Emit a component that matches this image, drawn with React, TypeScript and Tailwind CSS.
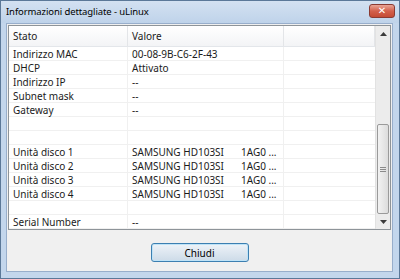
import React from 'react';

type Row = { label: string; value: string; extra?: string };

const rows: Row[] = [
  { label: 'Indirizzo MAC', value: '00-08-9B-C6-2F-43' },
  { label: 'DHCP', value: 'Attivato' },
  { label: 'Indirizzo IP', value: '--' },
  { label: 'Subnet mask', value: '--' },
  { label: 'Gateway', value: '--' },
  { label: '', value: '' },
  { label: '', value: '' },
  { label: 'Unità disco 1', value: 'SAMSUNG HD103SI', extra: '1AG0 ...' },
  { label: 'Unità disco 2', value: 'SAMSUNG HD103SI', extra: '1AG0 ...' },
  { label: 'Unità disco 3', value: 'SAMSUNG HD103SI', extra: '1AG0 ...' },
  { label: 'Unità disco 4', value: 'SAMSUNG HD103SI', extra: '1AG0 ...' },
  { label: '', value: '' },
  { label: 'Serial Number', value: '--' },
];

function ArrowUp() {
  return (
    <svg width="7" height="4" viewBox="0 0 7 4">
      <path d="M0 4 L3.5 0 L7 4 Z" fill="#3b3b3b" />
    </svg>
  );
}

function ArrowDown() {
  return (
    <svg width="7" height="4" viewBox="0 0 7 4">
      <path d="M0 0 L7 0 L3.5 4 Z" fill="#3b3b3b" />
    </svg>
  );
}

export default function App() {
  return (
    <div
      className="w-[400px] h-[279px] flex flex-col bg-[#c3d6ec] border border-[#5b7898] text-[10px] text-[#1b1b1b] overflow-hidden"
      style={{ fontFamily: '"Noto Sans", "Open Sans", sans-serif' }}
    >
      {/* Title bar */}
      <div className="h-[22px] shrink-0 flex items-center justify-between pl-[5px] pr-[4px] bg-gradient-to-b from-[#d3e1f1] to-[#bfd3ea]">
        <span className="leading-none text-[9.5px] tracking-[-0.1px] text-black">Informazioni dettagliate - uLinux</span>
        <div className="w-[26px] h-[14px] mt-[-3px] rounded-[3px] border border-[#8a3a32] bg-gradient-to-b from-[#e8a496] via-[#d3604c] to-[#c44a34] flex items-center justify-center">
          <span className="text-white font-bold text-[10px] leading-none" style={{ fontFamily: '"DejaVu Sans", sans-serif' }}>✕</span>
        </div>
      </div>

      {/* Client area */}
      <div className="flex-1 ml-[5px] mr-[6px] mb-[6px] border border-[#98aecb] bg-[#f0f0f0] flex flex-col pt-[1px] px-[1px]">
        {/* List view */}
        <div className="h-[205px] border border-[#8e9499] bg-white flex">
          <div className="flex-1 flex flex-col">
            {/* Header */}
            <div className="h-[21px] flex border-b border-[#e3e6ea] bg-gradient-to-b from-[#ffffff] to-[#f3f4f6]">
              <div className="w-[119px] pl-[4px] flex items-center border-r border-[#e3e5e8]">Stato</div>
              <div className="w-[156px] pl-[4px] flex items-center border-r border-[#e3e5e8]">Valore</div>
              <div className="flex-1 border-r border-[#e3e5e8]" />
            </div>
            {rows.map((r, i) => (
              <div key={i} className="h-[14px] flex border-b border-[#f0f0f0] leading-[13px]">
                <div className="w-[119px] pl-[4px] pt-[1px] border-r border-[#f0f0f0] whitespace-nowrap flex items-center">{r.label}</div>
                <div className="w-[156px] pl-[4px] pt-[1px] border-r border-[#f0f0f0] flex items-center whitespace-nowrap">
                  <span className="w-[109px]">{r.value}</span>
                  {r.extra && <span>{r.extra}</span>}
                </div>
                <div className="flex-1" />
              </div>
            ))}
          </div>
          {/* Scrollbar */}
          <div className="w-[15px] bg-[#ececec] border-l border-[#e2e2e2] flex flex-col">
            <div className="h-[15px] flex items-center justify-center"><ArrowUp /></div>
            <div className="h-[83px]" />
            <div className="h-[90px] mx-[1px] rounded-[2px] border border-[#9a9a9a] bg-gradient-to-r from-[#f2f2f2] to-[#dcdcdc] flex items-center justify-center">
              <div className="flex flex-col gap-[1px]">
                <div className="w-[6px] h-[1px] bg-[#8a8a8a]" />
                <div className="w-[6px] h-[1px] bg-[#8a8a8a]" />
                <div className="w-[6px] h-[1px] bg-[#8a8a8a]" />
              </div>
            </div>
            <div className="flex-1 flex items-center justify-center"><ArrowDown /></div>
          </div>
        </div>

        {/* Button */}
        <div className="flex justify-center mt-[13px]">
          <button className="w-[98px] h-[19px] rounded-[3px] border border-[#3c7fb1] bg-gradient-to-b from-[#eef3f8] to-[#cddbe8] flex items-center justify-center shadow-[inset_0_0_0_1px_#bfe3f7]">
            <span className="leading-none text-[10px] text-black">Chiudi</span>
          </button>
        </div>
      </div>
    </div>
  );
}
